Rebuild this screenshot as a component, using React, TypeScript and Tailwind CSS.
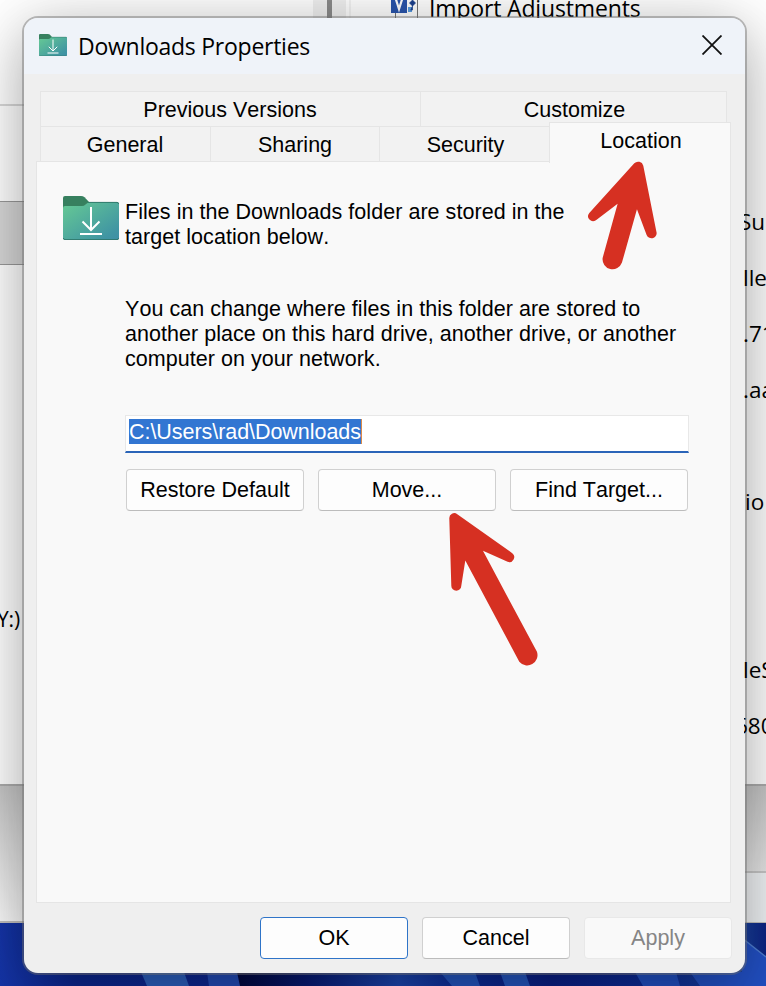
import React from "react";

const tabBase =
  "flex items-center justify-center border-[#e5e5e5] bg-[#f2f2f2] pt-[2px]";

function FolderIcon({ className, id }: { className: string; id: string }) {
  return (
    <svg viewBox="0 0 56 44" className={className} preserveAspectRatio="none">
      <defs>
        <linearGradient id={id} x1="0" y1="0" x2="1" y2="1">
          <stop offset="0" stopColor="#66ca94" />
          <stop offset="0.85" stopColor="#4095a3" />
          <stop offset="1" stopColor="#3f8fa6" />
        </linearGradient>
      </defs>
      <path d="M0 2q0-2 2-2h16q2 0 3.500 1.200L26 6v6H0z" fill="#37805f" />
      <path d="M0 12q0-2 2-2h17q2 0 3.500-1.500T26 6h28q2 0 2 2v34q0 2-2 2H2q-2 0-2-2z" fill={`url(#${id})`} />
      <path d="M25 6.400h29q1.600 0 1.600 1.600M.4 42q0 1.600 1.600 1.600h52q1.600 0 1.600-1.600" fill="none" stroke="#2d7467" strokeWidth="0.9" />
      <path d="M28 11v22.500M19.500 25.500l8.500 8.500 8.500-8.500M17 38h22" fill="none" stroke="#fff" strokeWidth="2" />
    </svg>
  );
}

function Btn({ children, className = "" }: { children: React.ReactNode; className?: string }) {
  return (
    <button
      className={`flex h-[42px] items-center justify-center rounded-[4px] border border-[#d0d0d0] border-b-[#bcbcbc] bg-[#fdfdfd] pt-px ${className}`}
    >
      {children}
    </button>
  );
}

const sideTexts = [
  { text: "Su", cls: "top-[206px] left-[739px]" },
  { text: "lle", cls: "top-[262px] left-[743px]" },
  { text: ".71", cls: "top-[318px] left-[743px]" },
  { text: ".aa", cls: "top-[374px] left-[743px]" },
  { text: "io", cls: "top-[486px] left-[745px]" },
  { text: "leS", cls: "top-[654px] left-[743px]" },
  { text: "680", cls: "top-[710px] left-[735px]" },
];

function Background() {
  return (
    <div className="absolute inset-0 overflow-hidden bg-[#0b2083] font-['Open_Sans',sans-serif] text-[23px] leading-8 tracking-[-0.16px] text-black">
      <svg className="absolute top-[922px] left-0" width="766" height="64" viewBox="0 0 766 64">
        <defs>
          <linearGradient id="wall" x1="0" x2="1" y1="0" y2="0">
            <stop offset="0" stopColor="#1535a8" />
            <stop offset="0.1" stopColor="#0c2690" />
            <stop offset="0.29" stopColor="#0d2793" />
            <stop offset="0.31" stopColor="#02083f" />
            <stop offset="0.4" stopColor="#071a74" />
            <stop offset="0.52" stopColor="#1c46b0" />
            <stop offset="0.6" stopColor="#0d2c98" />
            <stop offset="0.72" stopColor="#0a1f85" />
            <stop offset="0.85" stopColor="#0d2c98" />
            <stop offset="0.97" stopColor="#1a42a0" />
            <stop offset="1" stopColor="#0c2383" />
          </linearGradient>
        </defs>
        <rect width="766" height="64" fill="url(#wall)" />
        <path d="M141 50L147 64h42l-5-14z" fill="#2c60c0" />
        <path d="M207 50l2 14h31l-3-14z" fill="#234cb8" />
        <path d="M440 50l12 14h28l-5-14zM500 50l5 14h25l-5-14z" fill="#2456c0" />
        <path d="M635 50l8 14h37l-4-14zM690 50l10 14h66V35L742 16v34z" fill="#2250c4" />
        <path d="M742 16L766 35" fill="none" stroke="#4f7fd2" strokeWidth="1.500" />
      </svg>
      <div className="absolute inset-x-0 top-0 h-[923px] border-b-2 border-[#c4c2c0] bg-[linear-gradient(to_bottom,#c6c6c6_786px,#fcfcfc_922px)]" />
      <div className="absolute top-[871px] right-0 h-[51px] w-[30px] border-t-2 border-[#c8c8c8] bg-[#f2f5f7]" />
      <div className="absolute inset-x-0 top-0 h-[786px] border-b-2 border-[#acacac] bg-white" />
      <div className="absolute top-[104px] left-0 h-[2px] w-8 bg-[#d8d8d8]" />
      <div className="absolute top-[201px] left-0 h-[64px] w-8 border-y border-[#999] bg-[#d8d8d8]" />
      <div className="absolute top-0 left-[313px] flex h-5 w-[33px] justify-center bg-[#f0f0f0]">
        <div className="h-5 w-[5px] bg-[#8b8b8b]" />
      </div>
      <div className="absolute top-0 left-[349px] h-5 w-[2px] bg-[#f3f3f3]" />
      <svg className="absolute top-0 left-[390px]" width="30" height="20" viewBox="0 0 30 20">
        <path d="M5.500 0v20M27.500 0v20" stroke="#777" />
        <rect x="1" width="16" height="13" fill="#2a55ac" />
        <path d="M5.500 -2l3.500 11 3.500-11" fill="none" stroke="#fff" strokeWidth="2.200" />
        <path d="M18 7h4v5h-4z" fill="#5c9de0" />
        <path d="M19.500 3l3-3 3 3-3 3zM22.500 5v5h-2" fill="#1b3f8c" stroke="#1b3f8c" strokeWidth=".7" />
      </svg>
      <div className="absolute top-[-8px] left-[429px] whitespace-nowrap">Import Adjustments</div>
      <div className="absolute top-[603px] right-[746px] text-[21px]">Y:)</div>
    </div>
  );
}

export default function App() {
  return (
    <div className="relative h-[986px] w-[766px] overflow-hidden">
      <Background />
      <main className="absolute top-[18px] left-[24px] flex h-[955px] w-[721px] flex-col rounded-[14px] bg-[#efefef] font-['Liberation_Sans',Arial,sans-serif] text-[21.5px] leading-[25px] text-black shadow-[0_0_0_2px_rgba(110,110,110,0.45),0_24px_60px_rgba(0,0,0,0.2),0_4px_60px_rgba(0,0,0,0.2)] [font-kerning:none]">
        <header className="flex h-[56px] shrink-0 items-center justify-between rounded-t-[14px] bg-[#eff3f9] pr-[23px] pl-[15px]">
          <div className="flex items-center">
            <FolderIcon id="fs" className="-mt-[2px] h-[22px] w-[28px]" />
            <h1 className="ml-[11px] font-['Open_Sans',sans-serif] text-[23px] tracking-[-0.26px]">Downloads Properties</h1>
          </div>
          <svg width="20" height="20" viewBox="0 0 20 20" className="-mt-[2px]">
            <path d="M.5.5l19 19M19.500.5l-19 19" stroke="#111" strokeWidth="1.800" />
          </svg>
        </header>

        <nav className="mt-[17px] ml-[16px] flex h-[71px] w-[691px] shrink-0 flex-col">
          <div className="flex h-[35px] w-[687px]">
            <div className={`${tabBase} w-[380px] border-t border-l pr-px`}>Previous Versions</div>
            <div className={`${tabBase} w-[307px] border-x border-t pl-[2px]`}>Customize</div>
          </div>
          <div className="flex h-[36px]">
            <div className={`${tabBase} w-[170px] border-t border-l pr-px`}>General</div>
            <div className={`${tabBase} w-[169px] border-t border-l`}>Sharing</div>
            <div className={`${tabBase} w-[170px] border-t border-l pl-[2px]`}>Security</div>
            <div className="relative z-10 -mt-[4px] flex h-[41px] w-[182px] items-center justify-center border-x border-t border-[#e5e5e5] bg-[#f9f9f9] pb-[3px] pl-[2px]">
              Location
            </div>
          </div>
        </nav>

        <section className="-mt-px ml-[12px] h-[742px] w-[695px] shrink-0 border border-[#e5e5e5] bg-[#f9f9f9] pt-[34px] pl-[26px]">
          <div className="flex h-[97px]">
            <FolderIcon id="fl" className="h-[44px] w-[56px]" />
            <p className="ml-[6px] pt-[4px] tracking-[0.045px] whitespace-nowrap">
              Files in the Downloads folder are stored in the
              <br />
              target location below.
            </p>
          </div>
          <p className="ml-[62px] pt-[4px] tracking-[0.045px] whitespace-nowrap">
            You can change where files in this folder are stored to
            <br />
            another place on this hard drive, another drive, or another
            <br />
            computer on your network.
          </p>
          <div className="mt-[43px] ml-[62px] flex h-[38px] w-[564px] items-start border border-b-2 border-[#e8e8e8] border-b-[#2a64b8] bg-white pt-[3px] pl-[3px]">
            <span className="h-[25px] border-r border-[#d98a4a] bg-[#3276d2] leading-[27px] tracking-[-0.05px] text-white">C:\Users\rad\Downloads</span>
          </div>
          <div className="mt-[16px] ml-[63px] flex gap-[14px]">
            <Btn className="w-[178px]">Restore Default</Btn>
            <Btn className="w-[178px]">Move...</Btn>
            <Btn className="w-[178px]">Find Target...</Btn>
          </div>
        </section>

        <footer className="mt-[14px] flex justify-end gap-[14px] pr-[13px]">
          <Btn className="w-[148px] border-[#2f74c8]!">OK</Btn>
          <Btn className="w-[148px]">Cancel</Btn>
          <Btn className="w-[148px] border-[#e8e8e8]! bg-[#f9f9f9]! text-[#858585]">Apply</Btn>
        </footer>
      </main>

      <div className="absolute inset-y-0 left-[744px] w-[22px] overflow-hidden">
        <div className="absolute inset-y-0 -left-[744px] w-[800px] font-['Open_Sans',sans-serif] text-[22.5px] leading-8 text-black">
          {sideTexts.map((t) => (
            <span key={t.text} className={`absolute ${t.cls}`}>{t.text}</span>
          ))}
        </div>
      </div>

      <svg className="absolute top-0 left-0 z-20" width="766" height="986" fill="#d63022">
        <g transform="translate(560.3 140.3) scale(.3333)">
          <path d="M222 69A16 16 0 0 1 249 76L288 273A15 15 0 0 1 259 284L230 207L185 367A30 30 0 0 1 127 353L172 190L107 240A15 15 0 0 1 87 218Z" />
        </g>
        <g transform="translate(420.3 400.5) scale(.3333)">
          <path d="M87 354A15 15 0 0 1 111 341L276 458A15 15 0 0 1 262 484L188 451L350 754A31 31 0 0 1 297 784L135 480L123 556A15 15 0 0 1 93 556Z" />
        </g>
      </svg>
    </div>
  );
}
